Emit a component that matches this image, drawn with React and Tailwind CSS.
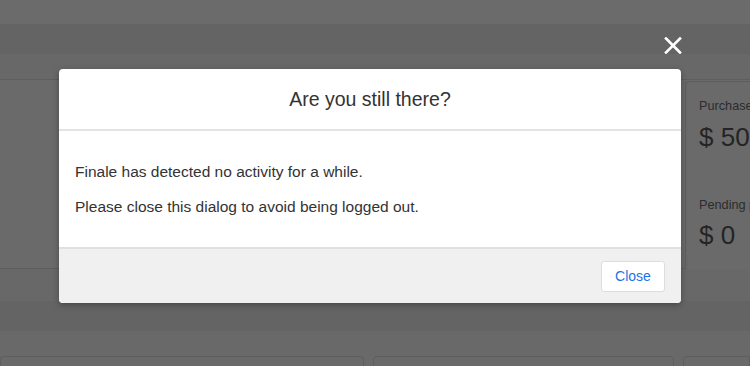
import React from "react";

export default function App() {
  return (
    <div className="relative w-[750px] h-[366px] overflow-hidden bg-[#6a6a6a] font-['Liberation_Sans',Arial,sans-serif]">
      {/* dimmed page underneath */}
      <div className="flex flex-col">
        <div className="h-[24px] bg-[#6b6b6b]" />
        <div className="h-[30px] bg-[#646464]" />
        <div className="h-[26px] bg-[#686868] border-b border-[#5e5e5e]" />
        <div className="h-[189px] flex border-b border-[#5e5e5e] bg-[#6a6a6a]">
          <div className="flex-1" />
          <div className="w-[65px] ml-[4px] mt-[1px] h-[188px] rounded-tl-[4px] border-l border-t border-[#5e5e5e] bg-[#6a6a6a] pl-[13px] pt-[16px] text-[#2c2c2c]">
            <div className="text-[12.7px] leading-[16px] whitespace-nowrap">Purchase</div>
            <div className="text-[26px] leading-[30px] mt-[8px] text-[#242424] whitespace-nowrap">$ 50</div>
            <div className="text-[12.7px] leading-[16px] mt-[45px] whitespace-nowrap">Pending p</div>
            <div className="text-[26px] leading-[30px] mt-[7px] text-[#242424] whitespace-nowrap">$ 0</div>
          </div>
        </div>
        <div className="h-[32px] bg-[#686868]" />
        <div className="h-[30px] bg-[#646464]" />
        <div className="h-[40px] bg-[#696969] flex gap-[9px] pt-[25px]">
          <div className="w-[364px] h-[20px] rounded-t-[4px] border border-[#5e5e5e]" />
          <div className="w-[301px] h-[20px] rounded-t-[4px] border border-[#5e5e5e]" />
          <div className="flex-1 h-[20px] rounded-tl-[4px] border border-[#5e5e5e]" />
        </div>
      </div>

      {/* close X */}
      <svg className="absolute left-[664px] top-[37px]" width="18" height="17" viewBox="0 0 18 17">
        <path d="M2 1.5 L16 15.5 M16 1.5 L2 15.5" stroke="#ffffff" strokeWidth="2.6" strokeLinecap="square" fill="none" />
      </svg>

      {/* modal */}
      <div className="absolute left-[59px] top-[69px] w-[622px] rounded-[4px] bg-white overflow-hidden shadow-[0_2px_6px_rgba(0,0,0,0.3)]">
        <div className="h-[62px] flex items-center justify-center border-b-2 border-[#e3e3e3]">
          <h2 className="text-[19.5px] text-[#333333] pt-[1px]">Are you still there?</h2>
        </div>
        <div className="px-[16px] pt-[32px] pb-[31px] text-[15.5px] leading-[18px] text-[#333333]">
          <p>Finale has detected no activity for a while.</p>
          <p className="mt-[17px]">Please close this dialog to avoid being logged out.</p>
        </div>
        <div className="h-[56px] bg-[#f0f0f0] border-t-2 border-[#e0e0e0] flex items-center justify-end pr-[16px]">
          <button className="w-[64px] h-[31px] bg-white border border-[#dddddd] rounded-[3px] text-[14px] text-[#1a73e8]">
            Close
          </button>
        </div>
      </div>
    </div>
  );
}
